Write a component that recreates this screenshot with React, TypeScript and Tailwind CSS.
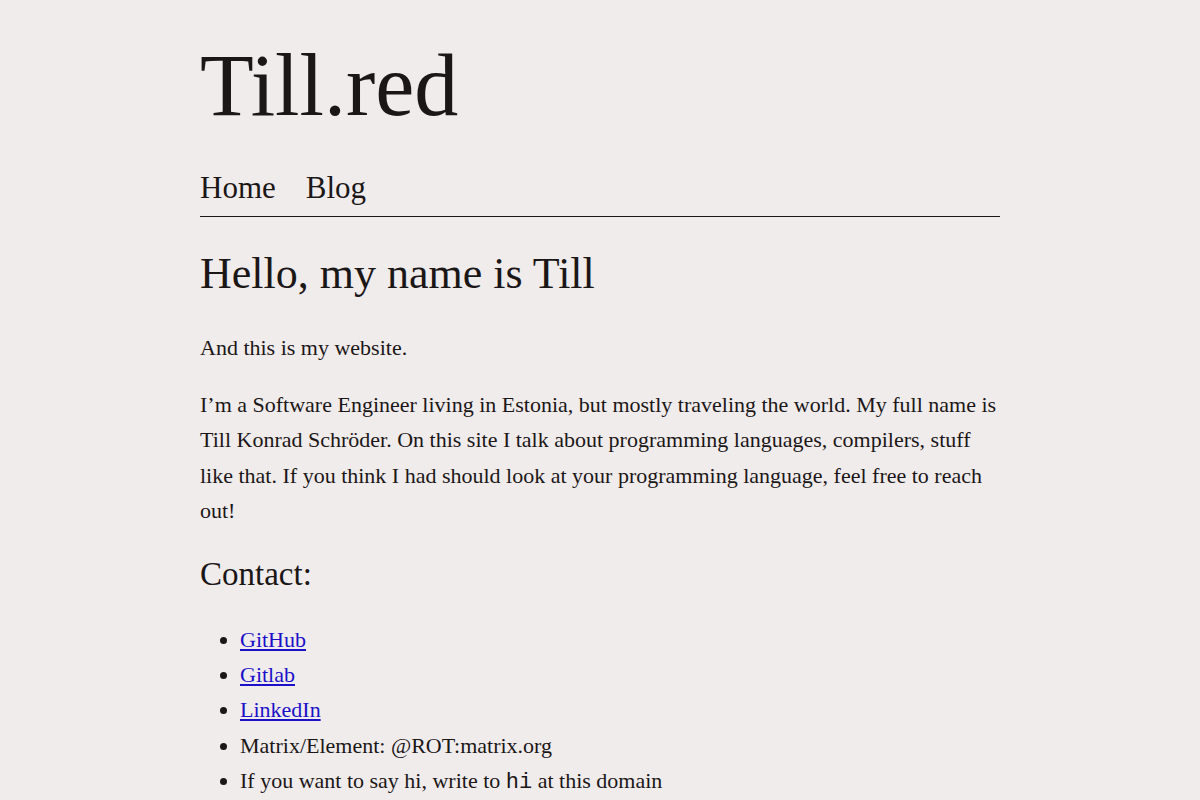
const serif = "font-['Liberation_Serif','Times_New_Roman',serif]";

const contacts = [
  { label: "GitHub", href: "#github" },
  { label: "Gitlab", href: "#gitlab" },
  { label: "LinkedIn", href: "#linkedin" },
];

export default function App() {
  return (
    <div className={`min-h-screen bg-[#f0ecec] text-[#1c1717] ${serif}`}>
      <div className="mx-auto w-[800px] pt-[42px]">
        <h1 className="text-[88px] leading-none">Till.red</h1>

        <nav className="mt-[42px] flex gap-[30px] border-b border-[#1c1717] pb-[13px] text-[31px] leading-none">
          <a href="#home">Home</a>
          <a href="#blog">Blog</a>
        </nav>

        <main className="pt-[35px]">
          <h2 className="text-[44px] leading-none">Hello, my name is Till</h2>

          <div className="mt-[34px] space-y-[22px] text-[22px] leading-[1.6]">
            <p>And this is my website.</p>
            <p>
              I’m a Software Engineer living in Estonia, but mostly traveling the
              world. My full name is Till Konrad Schröder. On this site I talk
              about programming languages, compilers, stuff like that. If you
              think I had should look at your programming language, feel free to
              reach out!
            </p>
          </div>

          <h3 className="mt-[30px] text-[33px] leading-none">Contact:</h3>

          <ul className="mt-[31px] list-disc pl-[40px] text-[22px] leading-[1.6]">
            {contacts.map((c) => (
              <li key={c.label}>
                <a href={c.href} className="text-[#1b10c8] underline">
                  {c.label}
                </a>
              </li>
            ))}
            <li>Matrix/Element: @ROT:matrix.org</li>
            <li>
              If you want to say hi, write to{" "}
              <code className="font-['Liberation_Mono','DejaVu_Sans_Mono',monospace] text-[22px]">
                hi
              </code>{" "}
              at this domain
            </li>
          </ul>
        </main>
      </div>
    </div>
  );
}
